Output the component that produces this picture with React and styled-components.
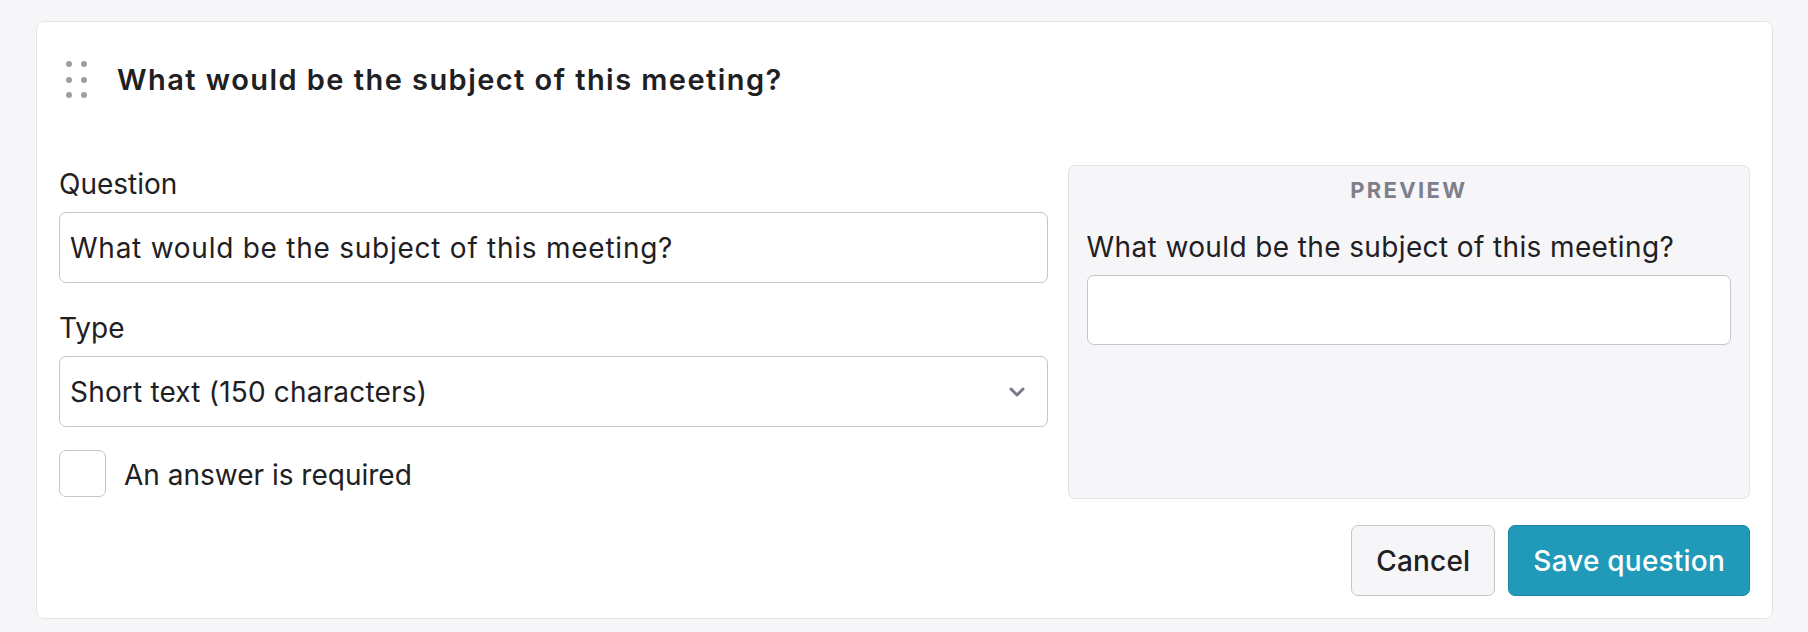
import React from "react";
import styled, { createGlobalStyle } from "styled-components";

const GlobalStyle = createGlobalStyle`
  html, body {
    margin: 0;
    padding: 0;
    background: #f6f6f8;
    font-family: "Inter", "Liberation Sans", sans-serif;
    color: #1f2023;
  }
  * { box-sizing: border-box; }
`;

const Page = styled.div`
  padding: 21px 35px 14px 36px;
`;

const Card = styled.div`
  background: #ffffff;
  border: 1px solid #e3e4e7;
  border-radius: 8px;
  padding: 22px;
`;

const Header = styled.div`
  display: flex;
  align-items: center;
  height: 71px;
  margin-bottom: 50px;
`;

const Handle = styled.div`
  display: grid;
  grid-template-columns: repeat(2, 6px);
  grid-auto-rows: 6px;
  column-gap: 9px;
  row-gap: 9.5px;
  margin-left: 7px;
  margin-right: 30px;

  span {
    width: 6px;
    height: 6px;
    border-radius: 50%;
    background: #9c9ea6;
  }
`;

const Title = styled.h2`
  margin: 0;
  font-size: 29px;
  font-weight: 600;
  letter-spacing: 1.45px;
  line-height: 1.5;
`;

const Body = styled.div`
  display: grid;
  grid-template-columns: minmax(0, 988fr) minmax(0, 682fr);
  column-gap: 20px;
  align-items: stretch;
`;

const Column = styled.div`
  display: flex;
  flex-direction: column;
  padding-bottom: 2px;
`;

const Label = styled.label`
  display: block;
  font-size: 28px;
  line-height: 39px;
  margin-top: ${(p) => p.$top || 0}px;
  margin-bottom: 8px;
`;

const Field = styled.div`
  position: relative;
  display: flex;
  align-items: center;
  height: ${(p) => p.$h || 71}px;
  padding: 0 10px;
  background: #ffffff;
  border: 1.5px solid #c5c6cb;
  border-radius: 7px;
  font-size: 28px;
  letter-spacing: ${(p) => p.$spacing || 0}px;
`;

const Chevron = styled.svg`
  margin-left: auto;
  margin-right: 12px;
`;

const CheckRow = styled.div`
  display: flex;
  align-items: center;
  gap: 18px;
  margin-top: 23px;
  font-size: 28px;

  span {
    padding-top: 3px;
  }
`;

const Box = styled.div`
  width: 47px;
  height: 47px;
  border: 1.5px solid #c5c6cb;
  border-radius: 7px;
  background: #fff;
`;

const Preview = styled.div`
  background: #f6f6f8;
  border: 1.5px solid #e2e3e6;
  border-radius: 7px;
  padding: 7px 18px 18px;
`;

const PreviewTag = styled.div`
  text-align: center;
  font-size: 22px;
  line-height: 34px;
  font-weight: 700;
  letter-spacing: 2.3px;
  color: #7d808a;
  margin-bottom: 21px;
`;

const PreviewQuestion = styled.div`
  font-size: 28px;
  letter-spacing: 0.38px;
  line-height: 39px;
  margin-bottom: 8px;
`;

const Actions = styled.div`
  display: flex;
  justify-content: flex-end;
  gap: 13px;
  margin-top: 26px;
`;

const Button = styled.button`
  height: 71px;
  padding: 0 24px;
  border-radius: 7px;
  font-family: "Inter", "Liberation Sans", sans-serif;
  font-size: 28px;
  font-weight: 500;
  letter-spacing: 0.2px;
  cursor: pointer;
  border: 1.5px solid ${(p) => (p.$primary ? "#1b87a5" : "#c5c6cb")};
  background: ${(p) => (p.$primary ? "#2199b8" : "#f6f6f8")};
  color: ${(p) => (p.$primary ? "#ffffff" : "#1f2023")};
`;

export default function App() {
  const question = "What would be the subject of this meeting?";
  return (
    <Page>
      <GlobalStyle />
      <Card>
        <Header>
          <Handle>
            {Array.from({ length: 6 }).map((_, i) => (
              <span key={i} />
            ))}
          </Handle>
          <Title>{question}</Title>
        </Header>
        <Body>
          <Column>
            <Label>Question</Label>
            <Field $spacing={0.75}>{question}</Field>
            <Label $top={26}>Type</Label>
            <Field $spacing={0.18}>
              Short text (150 characters)
              <Chevron width="16" height="10" viewBox="0 0 16 10" fill="none">
                <path
                  d="M2 2l6 6 6-6"
                  stroke="#787b86"
                  strokeWidth="3"
                  strokeLinecap="round"
                  strokeLinejoin="round"
                />
              </Chevron>
            </Field>
            <CheckRow>
              <Box />
              <span>An answer is required</span>
            </CheckRow>
          </Column>
          <Preview>
            <PreviewTag>PREVIEW</PreviewTag>
            <PreviewQuestion>{question}</PreviewQuestion>
            <Field $h={70} />
          </Preview>
        </Body>
        <Actions>
          <Button>Cancel</Button>
          <Button $primary>Save question</Button>
        </Actions>
      </Card>
    </Page>
  );
}
